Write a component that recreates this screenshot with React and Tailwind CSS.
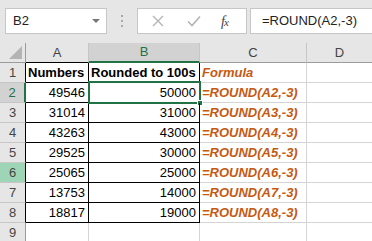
const rows = [
  { n: 1, a: "Numbers", b: "Rounded to 100s", c: "Formula", head: true },
  { n: 2, a: "49546", b: "50000", c: "=ROUND(A2,-3)" },
  { n: 3, a: "31014", b: "31000", c: "=ROUND(A3,-3)" },
  { n: 4, a: "43263", b: "43000", c: "=ROUND(A4,-3)" },
  { n: 5, a: "29525", b: "30000", c: "=ROUND(A5,-3)" },
  { n: 6, a: "25065", b: "25000", c: "=ROUND(A6,-3)" },
  { n: 7, a: "13753", b: "14000", c: "=ROUND(A7,-3)" },
  { n: 8, a: "18817", b: "19000", c: "=ROUND(A8,-3)" },
];

function FormulaBar() {
  return (
    <div className="h-[43px] bg-[#e6e6e6] flex items-start pt-[8px] pl-[5px]">
      {/* name box */}
      <div className="relative w-[102px] h-[26px] bg-white border border-[#c6c6c6] flex items-center pl-[7px] text-[13px] text-[#222]">
        B2
        <div className="absolute right-[6px] top-[10px] w-0 h-0 border-l-[4px] border-r-[4px] border-t-[4px] border-l-transparent border-r-transparent border-t-[#777]" />
      </div>
      <div className="w-[30px] h-[26px] flex flex-col items-center justify-center gap-[3px]">
        <div className="w-[2px] h-[2px] bg-[#a8a8a8]" />
        <div className="w-[2px] h-[2px] bg-[#a8a8a8]" />
        <div className="w-[2px] h-[2px] bg-[#a8a8a8]" />
      </div>
      {/* cancel / enter / fx */}
      <div className="w-[110px] h-[26px] bg-white border border-[#c6c6c6] flex items-center">
        <svg width="12" height="12" viewBox="0 0 12 12" className="ml-[14px]">
          <path d="M1 1L11 11M11 1L1 11" stroke="#b4b4b4" strokeWidth="1.4" />
        </svg>
        <svg width="14" height="12" viewBox="0 0 14 12" className="ml-[23px]">
          <path d="M1 6.5L5 10.5L13 1.5" stroke="#b4b4b4" strokeWidth="1.6" fill="none" />
        </svg>
        <span className="ml-[20px] text-[14px] italic text-[#444] font-['Liberation_Serif',serif] tracking-[-1px]">
          f<span className="text-[11px]">x</span>
        </span>
      </div>
      <div className="flex-1 ml-[3px] h-[26px] bg-white border border-[#c6c6c6] border-r-0 flex items-center pl-[11px] text-[13px] text-[#222]">
        =ROUND(A2,-3)
      </div>
    </div>
  );
}

export default function App() {
  return (
    <div className="w-[372px] h-[241px] overflow-hidden bg-white font-['Liberation_Sans',Arial,sans-serif]">
      <FormulaBar />
      <div className="grid grid-cols-[26px_63px_111px_107px_1fr] auto-rows-[20px] text-[13px]">
        {/* header row */}
        <div className="relative bg-[#e6e6e6] border-r border-b border-[#9b9b9b]">
          <div className="absolute right-[3px] bottom-[3px] w-0 h-0 border-r-[13px] border-r-[#b4b4b4] border-t-[13px] border-t-transparent" />
        </div>
        <div className="bg-[#e6e6e6] border-r border-[#c6c6c6] border-b border-b-black flex items-center justify-center text-[#444]">A</div>
        <div className="bg-[#d2d2d2] border-r border-[#c6c6c6] border-b-2 border-b-[#217346] flex items-center justify-center text-[#217346]">B</div>
        <div className="bg-[#e6e6e6] border-r border-[#c6c6c6] border-b border-b-[#9b9b9b] flex items-center justify-center text-[#444]">C</div>
        <div className="bg-[#e6e6e6] border-b border-[#9b9b9b] flex items-center justify-center text-[#444]">D</div>

        {rows.map((r) => (
          <Row key={r.n} r={r} />
        ))}

        {/* row 9 */}
        <div className="bg-[#e6e6e6] border-r border-[#9b9b9b] border-b border-b-[#c6c6c6] flex items-center justify-center text-[#444]">9</div>
        <div className="border-r border-b border-[#d4d4d4]" />
        <div className="border-r border-b border-[#d4d4d4]" />
        <div className="border-r border-b border-[#d4d4d4]" />
        <div className="border-b border-[#d4d4d4]" />
      </div>
    </div>
  );
}

function Row({ r }) {
  const sel = r.n === 2;
  let hdr = "bg-[#e6e6e6] text-[#444] border-r border-r-black";
  if (sel) hdr = "bg-[#d2d2d2] text-[#217346] border-r-2 border-r-[#217346]";
  if (r.n === 6) hdr = "bg-[#9fd5b7] text-[#444] border-r border-r-black";
  return (
    <>
      <div className={`${hdr} border-b border-b-[#c6c6c6] flex items-center justify-center`}>{r.n}</div>
      <div className={`border-r border-b border-black flex items-center ${r.head ? "pl-[2px] font-bold" : "justify-end pr-[3px]"} text-black`}>
        {r.a}
      </div>
      <div className={`relative border-r border-b border-black flex items-center ${r.head ? "pl-[2px] font-bold" : "justify-end pr-[3px]"} text-black`}>
        {r.b}
        {sel && (
          <>
            <div className="absolute left-[-1px] top-[-2px] right-[-2px] bottom-[-2px] border-2 border-[#217346]" />
            <div className="absolute right-[-4px] bottom-[-4px] w-[6px] h-[6px] bg-[#217346] border border-white" />
          </>
        )}
      </div>
      <div className="border-r border-b border-[#d4d4d4] flex items-center pl-[2px] font-bold italic text-[#c65911]">
        {r.c}
      </div>
      <div className="border-b border-[#d4d4d4]" />
    </>
  );
}
